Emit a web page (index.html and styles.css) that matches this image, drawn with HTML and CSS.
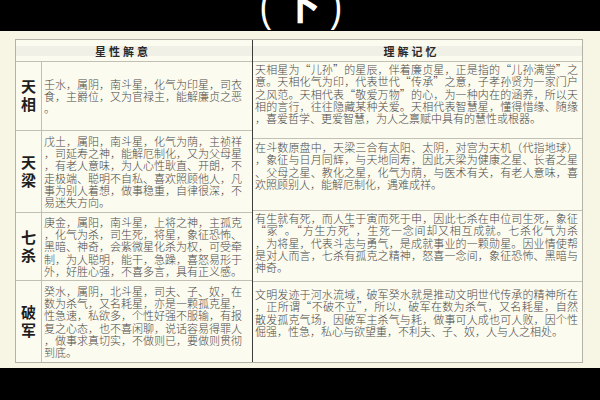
FILE: index.html
```html
<!DOCTYPE html>
<html lang="zh">
<head>
<meta charset="utf-8">
<title>星性解意</title>
<link rel="stylesheet" href="styles.css">
</head>
<body>
<header class="top"><div class="title"><span class="par">(</span><span class="xia">下</span><span class="par">)</span></div></header>
<main class="sheet">
  <div class="tables">
    <section class="tbl left">
      <div class="hd">星性解意</div>
      <div class="row">
        <div class="name"><span>天</span><span>相</span></div>
        <p class="txt"><span>壬水，属阴，南斗星，化气为印星，司衣</span><span>食，主爵位，又为官禄主，能解廉贞之恶</span><span>。</span></p>
      </div>
      <div class="row">
        <div class="name"><span>天</span><span>梁</span></div>
        <p class="txt"><span>戊土，属阳，南斗星，化气为荫，主祯祥</span><span>，司延寿之神，能解厄制化，又为父母星</span><span>，有老人意味，为人心性耿直、开朗，不</span><span>走极端、聪明不自私、喜欢照顾他人，凡</span><span>事为别人着想，做事稳重，自律很深，不</span><span>易迷失方向。</span></p>
      </div>
      <div class="row">
        <div class="name"><span>七</span><span>杀</span></div>
        <p class="txt"><span>庚金，属阳，南斗星，上将之神，主孤克</span><span>，化气为杀，司生死，将星，象征恐怖、</span><span>黑暗、神奇，会紫微星化杀为权，可受牵</span><span>制，为人聪明，能干，急躁，喜怒易形于</span><span>外，好胜心强，不喜多言，具有正义感。</span></p>
      </div>
      <div class="row">
        <div class="name"><span>破</span><span>军</span></div>
        <p class="txt"><span>癸水，属阴，北斗星，司夫、子、奴，在</span><span>数为杀气，又名耗星，亦是一颗孤克星，</span><span>性急速，私欲多，个性好强不服输，有报</span><span>复之心态，也不喜闲聊，说话容易得罪人</span><span>，做事求真切实，不做则已，要做则贯彻</span><span>到底。</span></p>
      </div>
    </section>
    <section class="tbl right">
      <div class="hd">理解记忆</div>
      <div class="row">
        <p class="txt"><span class="j">天相星为“儿孙”的星辰，伴着廉贞星，正是指的“儿孙满堂”之</span><span class="j">意。天相化气为印，代表世代“传承”之意，子孝孙贤为一家门户</span><span class="j">之风范。天相代表“敬爱万物”的心，为一种内在的涵养，所以天</span><span class="j">相的言行，往往隐藏某种关爱。天相代表智慧星，懂得惜缘、随缘</span><span>，喜爱哲学、更爱智慧，为人之禀赋中具有的慧性或根器。</span></p>
      </div>
      <div class="row">
        <p class="txt"><span class="j">在斗数原盘中，天梁三合有太阳、太阴，对宫为天机（代指地球）</span><span class="j">，象征与日月同辉，与天地同寿，因此天梁为健康之星、长者之星</span><span class="j">、父母之星、教化之星，化气为荫，与医术有关，有老人意味，喜</span><span>欢照顾别人，能解厄制化，遇难成祥。</span></p>
      </div>
      <div class="row">
        <p class="txt"><span class="j">有生就有死，而人生于寅而死于申，因此七杀在申位司生死，象征</span><span class="j">“冢”。“方生方死”，生死一念间却又相互成就。七杀化气为杀</span><span class="j">，为将星，代表斗志与勇气，是成就事业的一颗勋星。因业情使帮</span><span class="j">是对人而言，七杀有孤克之精神，怒喜一念间，象征恐怖、黑暗与</span><span>神奇。</span></p>
      </div>
      <div class="row">
        <p class="txt"><span class="j">文明发迹于河水流域，破军癸水就是推动文明世代传承的精神所在</span><span class="j">，正所谓“不破不立”，所以，破军在数为杀气，又名耗星，自然</span><span class="j">散发孤克气场，因破军主杀气与耗，做事可人成也可人败，因个性</span><span>倔强，性急，私心与欲望重，不利夫、子、奴，人与人之相处。</span></p>
      </div>
    </section>
  </div>
</main>
<footer class="bottom"></footer>
</body>
</html>
```
FILE: styles.css
```css
* { box-sizing: border-box; }
html, body { margin: 0; padding: 0; }
body {
  width: 600px;
  height: 400px;
  background: #000;
  font-family: "Noto Sans CJK SC", "Noto Sans", sans-serif;
  overflow: hidden;
}
.top {
  height: 31px;
  background: #000;
  overflow: hidden;
  display: flex;
  justify-content: center;
  align-items: flex-start;
}
.title {
  display: flex;
  align-items: flex-end;
  gap: 8px;
  height: 27px;
  color: #fff;
  margin-left: 2px;
}
.par {
  font-family: "Liberation Sans", sans-serif;
  font-size: 44px;
  line-height: 44px;
  height: 44px;
  flex: none;
  margin-bottom: -1px;
  transform: scaleX(0.8);
}
.xia {
  font-family: "Noto Sans CJK SC", sans-serif;
  font-weight: 700;
  font-size: 40px;
  line-height: 40px;
  height: 40px;
  flex: none;
  margin-bottom: 5px;
}
.sheet {
  height: 337px;
  background: #f7f5e3;
  padding: 8px 17px 5px 15px;
}
.tables {
  display: flex;
  height: 324px;
  border: 1px solid #b4b2a6;
  background: #fcfbef;
}
.tbl {
  display: grid;
}
.left {
  width: 236px;
  grid-template-rows: 21px 69px 82px 68px 82px;
}
.right {
  flex: 1;
  border-left: 1px solid #3c3c3c;
  grid-template-rows: 21px 77px 72px 71px 81px;
}
.hd {
  display: flex;
  align-items: center;
  justify-content: center;
  font-size: 11px;
  font-weight: 700;
  letter-spacing: 3px;
  color: #2a2a2a;
  background: linear-gradient(#fcfbef 0, #fcfbef 30%, #f1f0e6 30%, #f1f0e6 75%, #fcfbef 75%);
}
.left .hd { padding-right: 22px; }
.right .hd { padding-right: 12px; }
.row {
  border-top: 1px solid #c2c0b4;
  display: flex;
}
.name {
  width: 26px;
  flex: none;
  border-right: 1px solid #c2c0b4;
  display: flex;
  flex-direction: column;
  align-items: center;
  justify-content: center;
  gap: 1px;
  font-size: 15px;
  line-height: 17px;
  font-weight: 700;
  color: #1e1e1e;
  padding-bottom: 3px;
}
.txt {
  margin: 0;
  font-size: 11px;
  line-height: 12.3px;
  font-weight: 300;
  color: #4a4a4a;
  white-space: nowrap;
}
.txt span { display: block; }
.left .txt {
  align-self: center;
  padding: 0 3px 0 2px;
}
.right .txt {
  flex: 1;
  padding: 1px 4px 0 2px;
}
.right .row:nth-child(3) .txt { padding-top: 2px; }
.right .row:nth-child(5) .txt { padding-top: 6px; }
.txt .j {
  text-align: justify;
  text-align-last: justify;
}
.bottom {
  height: 32px;
  background: #000;
}
```
